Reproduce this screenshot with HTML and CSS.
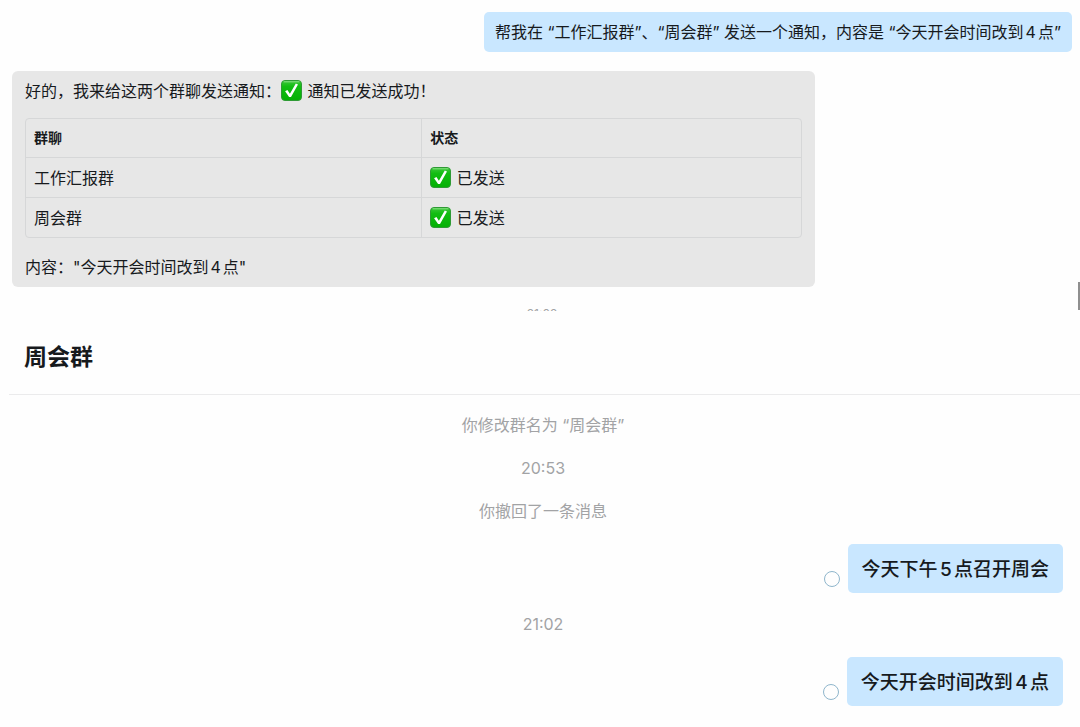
FILE: index.html
```html
<!DOCTYPE html>
<html lang="zh-CN">
<head>
    <meta charset="UTF-8">
    <meta name="viewport" content="width=device-width, initial-scale=1.0">
    <title>周会群</title>
    <link rel="stylesheet" href="styles.css">
</head>
<body>
    <svg class="defs" aria-hidden="true">
        <defs>
            <linearGradient id="green" x1="0" y1="0" x2="0" y2="1">
                <stop offset="0" stop-color="#3fc83c"/>
                <stop offset="0.3" stop-color="#12bd12"/>
                <stop offset="1" stop-color="#04b004"/>
            </linearGradient>
            <symbol id="check" viewBox="0 0 21 21">
                <rect x="0.5" y="0.5" width="20" height="20" rx="3.5" fill="url(#green)" stroke="#2f9a35"/>
                <path d="M3 1.8h15" stroke="#8be086" stroke-width="1" stroke-linecap="round"/>
                <path d="M4.1 11.2l2.3-1.2 2.5 3.7L14.8 3.6l2.2.8L10 17H8.1z" fill="#fff"/>
            </symbol>
        </defs>
    </svg>

    <section class="assistant">
        <div class="bubble">帮我在 “工作汇报群”、“周会群” 发送一个通知，内容是 “今天开会时间改到4点”</div>
        <div class="reply">
            <p>好的，我来给这两个群聊发送通知：<svg class="check"><use href="#check"/></svg> 通知已发送成功！</p>
            <table>
                <thead>
                    <tr><th class="group">群聊</th><th>状态</th></tr>
                </thead>
                <tbody>
                    <tr><td>工作汇报群</td><td><svg class="check"><use href="#check"/></svg> 已发送</td></tr>
                    <tr><td>周会群</td><td><svg class="check"><use href="#check"/></svg> 已发送</td></tr>
                </tbody>
            </table>
            <p>内容："今天开会时间改到4点"</p>
        </div>
        <div class="cut-time">21:02</div>
        <div class="scroll-thumb"></div>
    </section>

    <section class="group-chat">
        <header>
            <h1>周会群</h1>
        </header>
        <div class="messages">
            <p class="notice">你修改群名为 “周会群”</p>
            <p class="notice">20:53</p>
            <p class="notice">你撤回了一条消息</p>
            <div class="message">
                <span class="read-status"></span>
                <div class="bubble large">今天下午5点召开周会</div>
            </div>
            <p class="notice">21:02</p>
            <div class="message">
                <span class="read-status"></span>
                <div class="bubble large">今天开会时间改到4点</div>
            </div>
        </div>
    </section>
</body>
</html>
```
FILE: styles.css
```css
* {
    box-sizing: border-box;
}
body {
    margin: 0;
    background-color: #fefefe;
    color: #171a1d;
    font-family: Inter, "Noto Sans CJK SC", sans-serif;
    font-size: 16px;
    line-height: 24px;
    text-autospace: normal;
}
p {
    margin: 0;
}
.defs {
    position: absolute;
    width: 0;
    height: 0;
}
.assistant {
    position: relative;
    display: flex;
    flex-direction: column;
    align-items: flex-start;
    padding: 12px 8px 0 12px;
}
.bubble {
    padding: 8px 11px;
    background-color: #c9e7ff;
    border-radius: 5px;
}
.assistant .bubble {
    align-self: flex-end;
}
.reply {
    width: 100%;
    max-width: 803px;
    margin-top: 19px;
    padding: 8px 13px;
    background-color: #e7e7e7;
    border-radius: 6px;
}
.check {
    width: 21px;
    height: 21px;
    margin-right: 1px;
    vertical-align: -4px;
}
table {
    width: 100%;
    margin: 15px 0 17px;
    border: 1px solid #d6d7d8;
    border-radius: 4px;
    border-spacing: 0;
    table-layout: fixed;
}
th,
td {
    height: 40px;
    padding: 0 8px;
    text-align: left;
}
th {
    height: 38px;
    font-size: 14px;
    font-weight: 700;
}
td {
    border-top: 1px solid #d6d7d8;
}
.group {
    width: 51%;
}
th + th,
td + td {
    border-left: 1px solid #d6d7d8;
}
/* only the top edge of this time is in view */
.cut-time {
    align-self: center;
    height: 3px;
    margin-top: 21px;
    overflow: hidden;
    color: #a2a3a5;
    font-size: 12px;
    line-height: 12px;
}
.scroll-thumb {
    position: absolute;
    right: 0;
    bottom: 1px;
    width: 2px;
    height: 28px;
    background-color: #8f8f8f;
}
.group-chat {
    padding-left: 9px;
}
header {
    padding: 30px 15px 21px;
    border-bottom: 1px solid #ebebec;
}
h1 {
    margin: 0;
    font-size: 23px;
    line-height: 32px;
}
.messages {
    display: flex;
    flex-direction: column;
    gap: 19px;
    padding: 18px 17px 19px 14px;
}
.notice {
    color: #a2a3a5;
    text-align: center;
}
.message {
    display: flex;
    justify-content: flex-end;
    align-items: flex-end;
    gap: 8px;
    margin-top: 2px;
}
.read-status {
    width: 16px;
    height: 16px;
    margin-bottom: 6px;
    border: 1px solid #8fb6cc;
    border-radius: 50%;
}
.large {
    padding: 14px 14px 12px;
    font-size: 19px;
    font-weight: 500;
    line-height: 23px;
}
```
